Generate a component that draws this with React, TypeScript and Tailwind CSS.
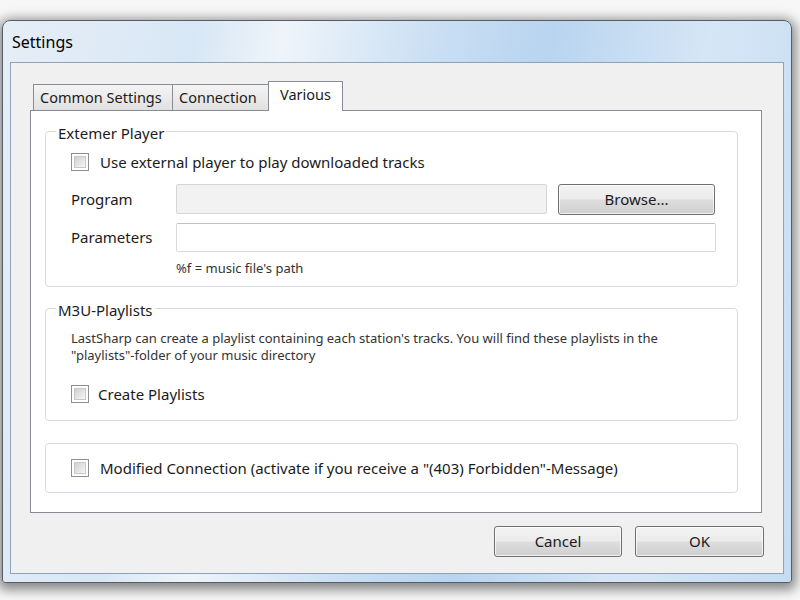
import React from "react";

function CheckBox() {
  return (
    <span className="block w-[18px] h-[18px] shrink-0 border border-[#8e8f8f] bg-white p-[2px]">
      <span className="block w-full h-full border border-[#c9c9c9] bg-[linear-gradient(135deg,#d0d0d0,#f6f6f6)]" />
    </span>
  );
}

function Group({ legend, className, children }: { legend?: string; className?: string; children: React.ReactNode }) {
  return (
    <div className={`relative border border-[#d5dbe0] rounded-[4px] ${className ?? ""}`}>
      {legend && (
        <span className="absolute left-[10px] top-[-9px] bg-white px-[2px] text-[15px] leading-[20px]">{legend}</span>
      )}
      {children}
    </div>
  );
}

function WinButton({ label, className }: { label: string; className?: string }) {
  return (
    <button className={`h-[31px] rounded-[3px] border border-[#707070] bg-[linear-gradient(to_bottom,#f3f3f3_0%,#ebebeb_48%,#dddddd_52%,#cfcfcf_100%)] shadow-[inset_0_0_0_1px_rgba(255,255,255,0.7)] text-[15px] text-[#1b1b1b] ${className ?? ""}`}>
      {label}
    </button>
  );
}

export default function App() {
  return (
    <div className="w-[800px] h-[600px] overflow-hidden bg-[#f7f7f7] pt-[20px] pl-[2px] font-['Noto_Sans','Open_Sans',sans-serif] text-[#1b1b1b]">
      {/* window frame */}
      <div className="w-[790px] h-[563px] flex flex-col rounded-t-[8px] rounded-b-[3px] border border-[#555d66] px-[7px] pb-[8px] bg-[linear-gradient(100deg,#e6eef7_0%,#d8e7f5_22%,#eef4fa_32%,#c8def3_50%,#b9d4ef_62%,#d5e6f6_80%,#c6dcf2_100%)] shadow-[0_3px_12px_4px_rgba(0,0,0,0.45)]">
        <div className="h-[41px] shrink-0 flex items-center pl-[2px] text-[16px] text-black">Settings</div>

        {/* client area */}
        <div className="flex-1 flex flex-col bg-[#f0f0f0] border border-[#8fa3b8] pt-[18px] pl-[19px]">
          {/* tabs */}
          <div className="flex items-end h-[29px] ml-[3px]">
            <div className="w-[140px] h-[26px] flex items-center pl-[6px] border border-b-0 border-[#898c95] bg-[linear-gradient(to_bottom,#f4f4f4,#e1e1e1)] text-[14.5px]">
              Common Settings
            </div>
            <div className="-ml-px w-[97px] h-[26px] flex items-center pl-[6px] border border-b-0 border-[#898c95] bg-[linear-gradient(to_bottom,#f4f4f4,#e1e1e1)] text-[14.5px]">
              Connection
            </div>
            <div className="relative z-10 -ml-px -mb-px w-[75px] h-[30px] flex items-center justify-center pb-[3px] border border-b-0 border-[#898c95] bg-white text-[14.5px]">
              Various
            </div>
          </div>

          {/* tab page */}
          <div className="w-[732px] h-[403px] shrink-0 border border-[#898c95] bg-white pt-[20px] pl-[14px]">
            <Group legend="Extemer Player" className="w-[693px] pt-[21px] pb-[10px] pl-[25px]">
              <div className="flex items-center h-[18px]">
                <CheckBox />
                <span className="ml-[11px] text-[15px]">Use external player to play downloaded tracks</span>
              </div>
              <div className="flex items-center h-[30px] mt-[13px]">
                <span className="w-[105px] text-[15px]">Program</span>
                <div className="w-[371px] h-full rounded-[2px] border border-[#d6d6d6] bg-[#f2f2f2]" />
                <WinButton label="Browse..." className="ml-[11px] w-[157px] h-[30px]" />
              </div>
              <div className="flex items-center h-[29px] mt-[9px]">
                <span className="w-[105px] text-[15px]">Parameters</span>
                <div className="w-[540px] h-full rounded-[2px] border border-[#dadada] border-t-[#c2c2c2] bg-white" />
              </div>
              <div className="mt-[8px] pl-[105px] h-[16px] leading-[16px] text-[13px] text-[#333]">%f = music file's path</div>
            </Group>

            <Group legend="M3U-Playlists" className="w-[693px] mt-[21px] pt-[21px] pb-[17px] pl-[25px]">
              <p className="text-[13px] leading-[17px] text-[#333]">
                LastSharp can create a playlist containing each station's tracks. You will find these playlists in the
                <br />
                "playlists"-folder of your music directory
              </p>
              <div className="flex items-center h-[18px] mt-[21px]">
                <CheckBox />
                <span className="ml-[9px] text-[15px]">Create Playlists</span>
              </div>
            </Group>

            <Group className="w-[693px] mt-[22px] py-[15px] pl-[25px]">
              <div className="flex items-center h-[18px]">
                <CheckBox />
                <span className="ml-[11px] text-[15px]">Modified Connection (activate if you receive a "(403) Forbidden"-Message)</span>
              </div>
            </Group>
          </div>

          {/* dialog buttons */}
          <div className="flex justify-end gap-[13px] mt-[13px] pr-[19px]">
            <WinButton label="Cancel" className="w-[128px]" />
            <WinButton label="OK" className="w-[129px]" />
          </div>
        </div>
      </div>
    </div>
  );
}
